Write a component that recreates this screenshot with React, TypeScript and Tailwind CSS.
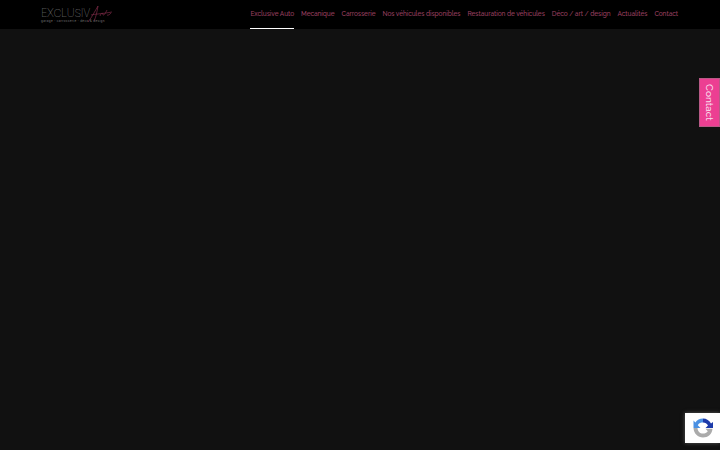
import React from 'react';

const links = [
  { label: 'Exclusive Auto', active: true },
  { label: 'Mecanique' },
  { label: 'Carrosserie' },
  { label: 'Nos véhicules disponibles' },
  { label: 'Restauration de véhicules' },
  { label: 'Déco / art / design' },
  { label: 'Actualités' },
  { label: 'Contact' },
];

const Logo = () => (
  <div className="relative flex flex-col w-[72px] gap-[1.5px] mt-[2px] font-['Inter',sans-serif]">
    <span className="text-[11px] leading-[10px] tracking-[-0.35px] font-thin text-[#a8a8a8]">EXCLUSIV</span>
    <span className="text-[3px] leading-[3px] tracking-[0.35px] text-[#777777] whitespace-nowrap">garage · carrosserie · déco &amp; design</span>
    <svg className="absolute left-[44px] -top-[4px]" width="28" height="20" viewBox="0 0 28 20" fill="none" stroke="#8f3050" strokeWidth="0.6">
      <path d="M3 18C7 13 10 7 13 2C12 8 11 13 9 17" />
      <path d="M6 11C10 10 16 10 27 8" />
      <path d="M15 12C16 9 18 8 18 11C19 12 21 8 22 6M22 11C23 12 25 10 26 9" />
    </svg>
  </div>
);

const Recaptcha = () => (
  <div className="absolute right-0 bottom-[7px] w-[35px] h-[30px] bg-white flex items-center justify-start pl-[7px] shadow-[0_0_4px_rgba(120,120,120,0.7)]">
    <svg width="22" height="22" viewBox="0 0 22 22" fill="none">
      <path d="M11 1.5C7.8 1.5 5 3.1 3.4 5.5L1.5 3.6V11H8.5L5.8 8.2C6.9 6 8.9 5.5 11 5.5Z" fill="#4a90e2" />
      <path d="M11 1.5C14.5 1.5 17.6 3.5 19 6.5L21 5V11H13.5L16 8.5C15 6.8 13.2 5.5 11 5.5Z" fill="#1c3aa9" />
      <path d="M1.5 11H5.5C5.7 14.5 7.8 16.5 11 16.5C13 16.5 14.7 15.8 15.8 14.2L13.5 11.8H20.5C20 17.5 16 20.5 11 20.5C6 20.5 1.7 16.5 1.5 11Z" fill="#ababab" />
    </svg>
  </div>
);

export default function App() {
  return (
    <div className="relative w-full h-[450px] overflow-hidden bg-[#111111] font-['Raleway','Open_Sans','Liberation_Sans',sans-serif]">
      <header className="h-[29px] bg-black flex items-center justify-between pl-[41px] pr-[42px]">
        <Logo />
        <nav className="flex items-stretch h-full gap-[7px]">
          {links.map((link) => (
            <a
              key={link.label}
              className={`flex items-center h-full pt-[2px] text-[6.53px] font-medium tracking-[-0.05px] whitespace-nowrap text-[#9c4060] border-b ${link.active ? 'border-white' : 'border-transparent'}`}
            >
              {link.label}
            </a>
          ))}
        </nav>
      </header>
      <div className="absolute right-0 top-[78px] w-[21px] h-[49px] bg-[#ec3f92] border border-[#b85a86] flex items-center justify-center">
        <span className="text-[10px] font-medium text-[#f8dcea] rotate-90 whitespace-nowrap">Contact</span>
      </div>
      <Recaptcha />
    </div>
  );
}
